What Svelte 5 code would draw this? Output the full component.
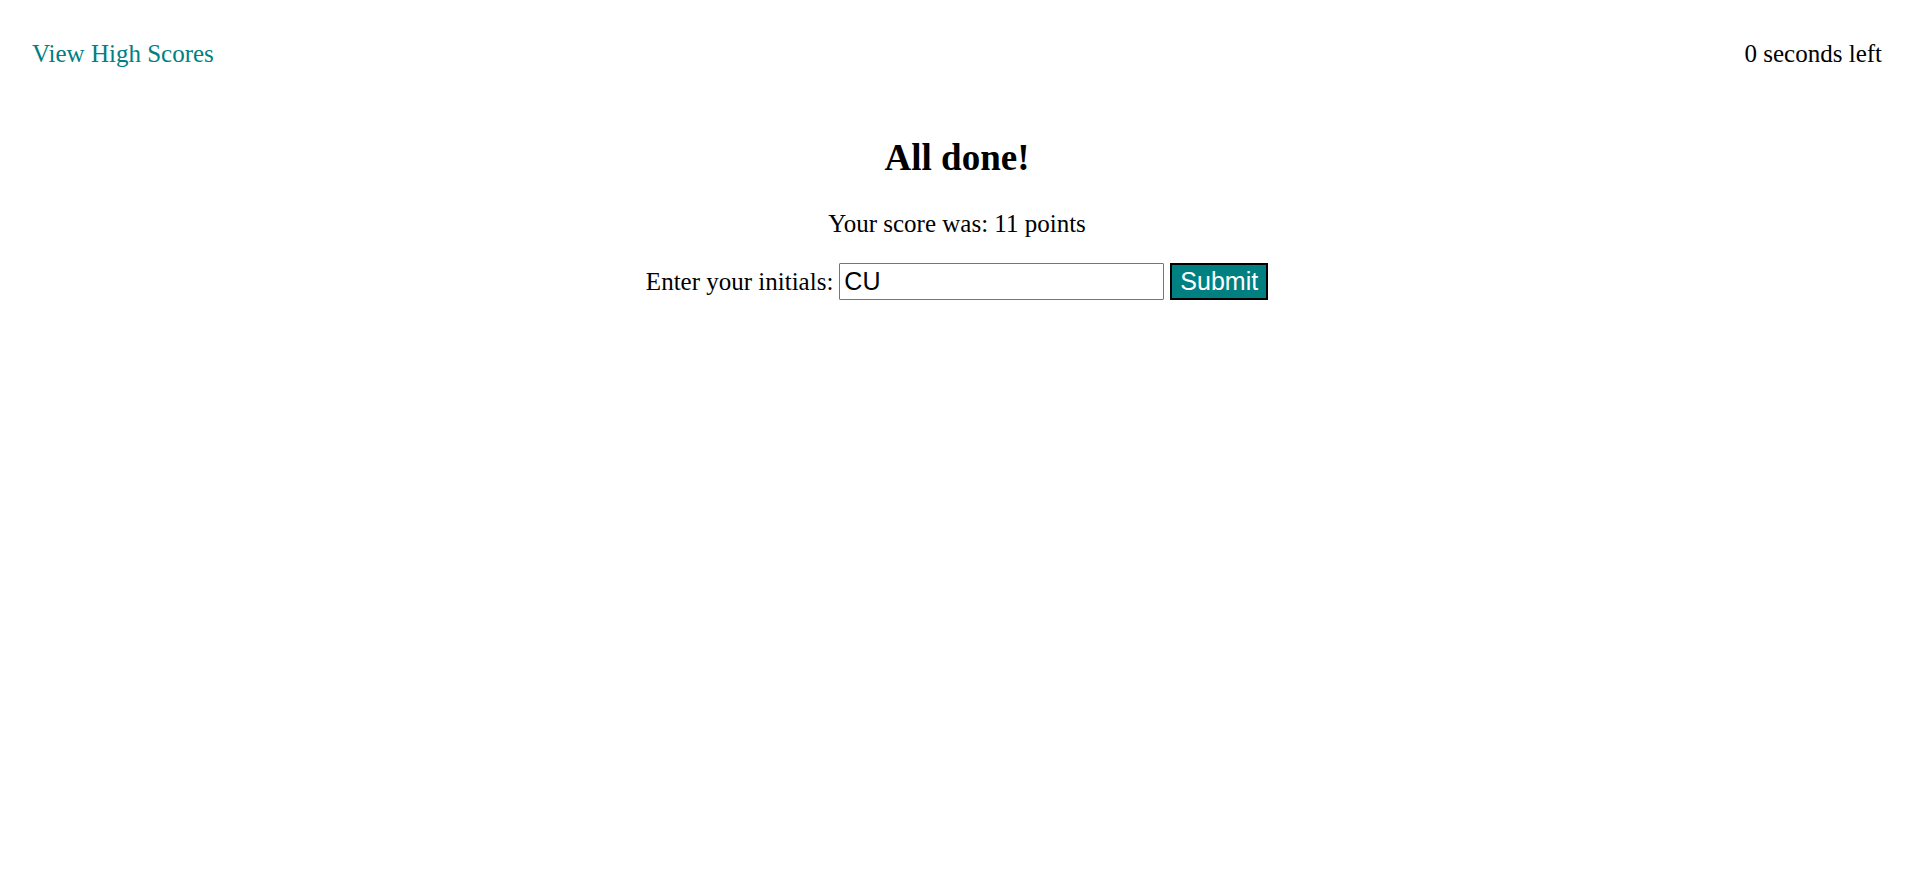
<script>
  let initials = $state('CU');
  const score = 11;
  const secondsLeft = 0;
</script>

<div class="page">
  <header>
    <a href="#scores">View High Scores</a>
    <div>{secondsLeft} seconds left</div>
  </header>
  <main>
    <h2>All done!</h2>
    <p>Your score was: {score} points</p>
    <form onsubmit={(event) => event.preventDefault()}>
      <label for="initials">Enter your initials:</label>
      <input id="initials" type="text" bind:value={initials} />
      <button type="submit">Submit</button>
    </form>
  </main>
</div>

<style>
  :global(body) {
    margin: 0;
    background: #fff;
  }

  .page {
    padding: 32px 35px 32px 32px;
    color: #000;
    font-family: "Liberation Serif", "Times New Roman", serif;
    font-size: 25px;
    line-height: 28px;
  }

  header {
    display: flex;
    justify-content: space-between;
    padding: 8px 0;
  }

  a {
    color: teal;
    text-decoration: none;
  }

  main {
    padding-top: 60px;
    text-align: center;
  }

  h2 {
    margin: 0;
    font-size: 37px;
    line-height: 44px;
  }

  p {
    margin: 30px 0 25px;
  }

  form {
    display: flex;
    justify-content: center;
    align-items: center;
    gap: 6px;
  }

  input,
  button {
    box-sizing: border-box;
    height: 37px;
    margin: 0;
    font-family: "Liberation Sans", Arial, sans-serif;
    font-size: 25px;
  }

  input {
    width: 325px;
    padding: 1px 4px;
    border: 1px solid #767676;
    border-radius: 1px;
    background: #fff;
    color: #000;
  }

  button {
    padding: 1px 8px;
    border: 2px solid #000;
    background: teal;
    color: #fff;
  }
</style>
